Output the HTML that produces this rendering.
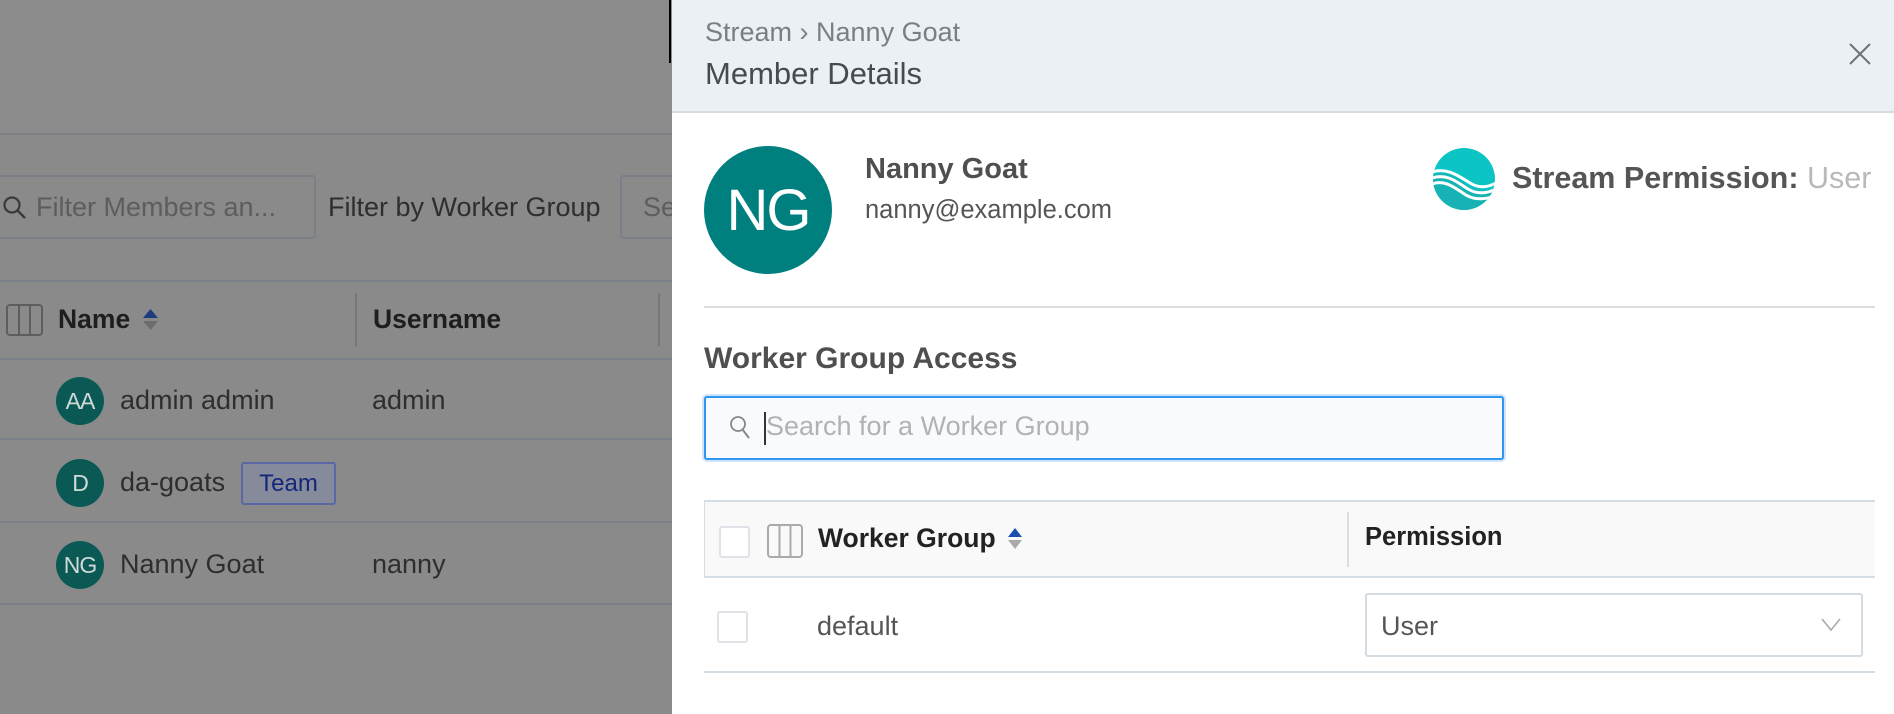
<!DOCTYPE html>
<html><head><meta charset="utf-8"><style>
*{box-sizing:border-box;margin:0;padding:0}
body{width:1894px;height:714px;overflow:hidden;position:relative;background:#8a8a8a;font-family:"Liberation Sans",sans-serif}
.a{position:absolute;white-space:nowrap}
.dt{color:#2e2e2e;font-size:27px}
.av{border-radius:50%;background:#0b5955;color:#cfd9d8;display:flex;align-items:center;justify-content:center;font-size:23px;letter-spacing:-1px}
.hl{height:2px;background:#7c8089;left:0;width:672px}
.pt{color:#555}
</style></head><body>
<!-- left dimmed page -->
<div class="a" style="left:0;top:0;width:672px;height:133px;background:#8c8c8c"></div>
<div class="a" style="left:669px;top:0;width:2px;height:63px;background:#000"></div>
<div class="a hl" style="top:133px;background:#7f8085"></div>
<div class="a" style="left:-4px;top:175px;width:320px;height:64px;border:2px solid #7b7f88;border-radius:3px"></div>
<svg class="a" style="left:2px;top:195px" width="26" height="26" viewBox="0 0 26 26"><circle cx="10" cy="10" r="7.5" fill="none" stroke="#3a3a3a" stroke-width="2.2"/><line x1="15.5" y1="15.5" x2="23" y2="23" stroke="#3a3a3a" stroke-width="2.4"/></svg>
<div class="a" style="left:36px;top:192px;font-size:27px;color:#5d5d5d">Filter Members an...</div>
<div class="a dt" style="left:328px;top:192px">Filter by Worker Group</div>
<div class="a" style="left:620px;top:175px;width:70px;height:64px;border:2px solid #7b7f88;border-radius:3px"></div>
<div class="a" style="left:643px;top:192px;font-size:27px;color:#5d5d5d">Se</div>
<div class="a hl" style="top:280px"></div>
<svg class="a" style="left:6px;top:304px" width="37" height="32"><rect x="1" y="1" width="35" height="30" rx="3" fill="none" stroke="#5e5e5e" stroke-width="2"/><line x1="13" y1="1" x2="13" y2="31" stroke="#5e5e5e" stroke-width="2"/><line x1="24" y1="1" x2="24" y2="31" stroke="#5e5e5e" stroke-width="2"/></svg>
<div class="a" style="left:58px;top:304px;font-size:26.5px;font-weight:bold;color:#1e1e1e">Name</div>
<svg class="a" style="left:143px;top:309px" width="15" height="22"><polygon points="7.5,0 15,9 0,9" fill="#1c3b80"/><polygon points="0,12 15,12 7.5,21" fill="#6d6d6d"/></svg>
<div class="a" style="left:355px;top:293px;width:2px;height:53px;background:#777"></div>
<div class="a" style="left:373px;top:304px;font-size:26.5px;font-weight:bold;color:#1e1e1e">Username</div>
<div class="a" style="left:658px;top:293px;width:2px;height:53px;background:#777"></div>
<div class="a hl" style="top:358px"></div>
<div class="a av" style="left:56px;top:377px;width:48px;height:48px">AA</div>
<div class="a dt" style="left:120px;top:385px">admin admin</div>
<div class="a dt" style="left:372px;top:385px">admin</div>
<div class="a hl" style="top:438px"></div>
<div class="a av" style="left:56px;top:459px;width:48px;height:48px">D</div>
<div class="a dt" style="left:120px;top:467px">da-goats</div>
<div class="a" style="left:241px;top:462px;width:95px;height:43px;border:2px solid #5a69a6;border-radius:3px;background:#858b9b;color:#14277a;font-size:24px;text-align:center;line-height:39px">Team</div>
<div class="a hl" style="top:521px"></div>
<div class="a av" style="left:56px;top:541px;width:48px;height:48px">NG</div>
<div class="a dt" style="left:120px;top:549px">Nanny Goat</div>
<div class="a dt" style="left:372px;top:549px">nanny</div>
<div class="a hl" style="top:603px"></div>

<!-- panel -->
<div class="a" style="left:672px;top:0;width:1222px;height:714px;background:#fff"></div>
<div class="a" style="left:672px;top:0;width:1222px;height:113px;background:#ebf0f4;border-bottom:2px solid #d9dcdf"></div>
<div class="a" style="left:705px;top:17px;font-size:27px;color:#7a7f85">Stream &rsaquo; Nanny Goat</div>
<div class="a" style="left:705px;top:56px;font-size:31px;color:#474b50">Member Details</div>
<svg class="a" style="left:1848px;top:42px" width="24" height="24"><path d="M2 2L22 22M22 2L2 22" stroke="#6f7378" stroke-width="2"/></svg>
<div class="a" style="left:704px;top:146px;width:128px;height:128px;border-radius:50%;background:#007f7f;color:#fff;font-size:58px;display:flex;align-items:center;justify-content:center;letter-spacing:-2px">NG</div>
<div class="a pt" style="left:865px;top:153px;font-size:29px;font-weight:bold;color:#4f4f4f">Nanny Goat</div>
<div class="a pt" style="left:865px;top:196px;font-size:25.5px">nanny@example.com</div>
<svg class="a" style="left:1432px;top:147px" width="64" height="64" viewBox="0 0 64 64"><defs><clipPath id="c"><circle cx="32" cy="32" r="31"/></clipPath></defs><circle cx="32" cy="32" r="31" fill="#0cc4c4"/><g clip-path="url(#c)"><path d="M0 28 C18 22 28 34 38 40 C48 46 56 44 64 40 L64 64 L0 64Z" fill="#17b3b4"/><path d="M0 25 C16 20 28 30 38 36 C48 42 56 40 64 36" stroke="#fff" stroke-width="3" fill="none"/><path d="M0 31 C16 26 26 36 36 42 C46 48 56 46 64 42" stroke="#fff" stroke-width="3" fill="none"/><path d="M0 37 C14 32 24 42 34 48 C44 54 56 52 64 48" stroke="#fff" stroke-width="3" fill="none"/></g></svg>
<div class="a" style="left:1512px;top:161px;font-size:30.5px;font-weight:bold;color:#555">Stream Permission: <span style="font-weight:normal;color:#b9b9b9">User</span></div>
<div class="a" style="left:704px;top:306px;width:1171px;height:2px;background:#dcdcdc"></div>
<div class="a" style="left:704px;top:342px;font-size:30px;font-weight:bold;color:#4f4f4f">Worker Group Access</div>
<div class="a" style="left:704px;top:396px;width:800px;height:64px;border:2px solid #2e96ee;border-radius:3px;background:#f8fafd;box-shadow:0 0 0 2px #cfe4fb"></div>
<svg class="a" style="left:728px;top:414px" width="24" height="26"><circle cx="10" cy="10" r="7" fill="none" stroke="#888" stroke-width="1.8"/><line x1="14.5" y1="15.5" x2="21" y2="24" stroke="#888" stroke-width="2"/></svg>
<div class="a" style="left:764px;top:412px;width:2px;height:33px;background:#333"></div>
<div class="a" style="left:766px;top:411px;font-size:27px;color:#b2b2b2">Search for a Worker Group</div>
<div class="a" style="left:704px;top:500px;width:1171px;height:78px;background:#f9f9f9;border-top:2px solid #d6dee5;border-bottom:2px solid #d6dee5;border-left:1px solid #d6dee5"></div>
<div class="a" style="left:719px;top:526px;width:31px;height:32px;border:2px solid #dfe3e7;border-radius:3px;background:#fff"></div>
<svg class="a" style="left:767px;top:524px" width="36" height="34"><rect x="1" y="1" width="34" height="32" rx="3" fill="none" stroke="#aaa" stroke-width="2"/><line x1="12.5" y1="1" x2="12.5" y2="33" stroke="#aaa" stroke-width="2"/><line x1="23.5" y1="1" x2="23.5" y2="33" stroke="#aaa" stroke-width="2"/></svg>
<div class="a" style="left:818px;top:523px;font-size:26.5px;font-weight:bold;color:#222">Worker Group</div>
<svg class="a" style="left:1008px;top:528px" width="14" height="22"><polygon points="7,0 14,9 0,9" fill="#1b4fb0"/><polygon points="0,12 14,12 7,21" fill="#aaa"/></svg>
<div class="a" style="left:1347px;top:512px;width:2px;height:55px;background:#ddd"></div>
<div class="a" style="left:1365px;top:523px;font-size:25.5px;font-weight:bold;color:#222">Permission</div>
<div class="a" style="left:717px;top:611px;width:31px;height:32px;border:2px solid #dfe3e7;border-radius:3px;background:#fff"></div>
<div class="a" style="left:817px;top:611px;font-size:27px;color:#555">default</div>
<div class="a" style="left:1365px;top:593px;width:498px;height:64px;border:2px solid #d4dce3;border-radius:3px;background:#fff"></div>
<div class="a" style="left:1381px;top:611px;font-size:27px;color:#555">User</div>
<svg class="a" style="left:1821px;top:618px" width="20" height="14"><path d="M1 1L10 12L19 1" fill="none" stroke="#aaa" stroke-width="1.6"/></svg>
<div class="a" style="left:704px;top:671px;width:1171px;height:2px;background:#d6dee5"></div>
</body></html>
